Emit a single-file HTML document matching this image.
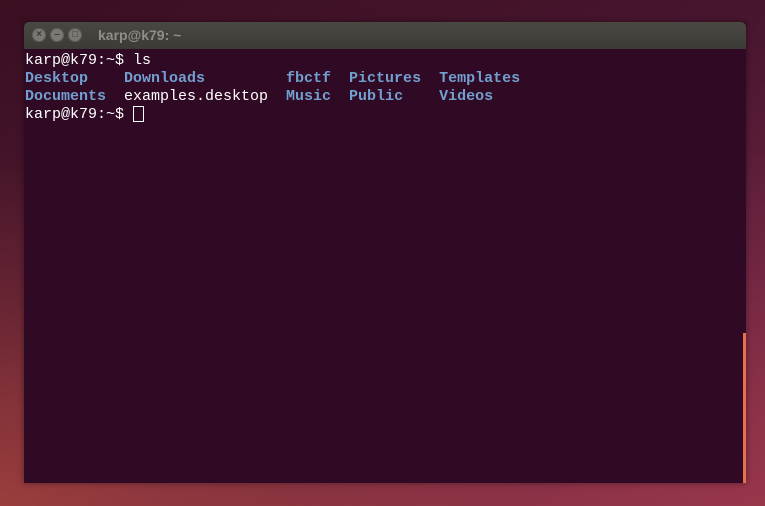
<!DOCTYPE html>
<html><head><style>
body{margin:0;width:765px;height:506px;overflow:hidden;background:linear-gradient(160deg,#3a0f22 0%,#4a1630 40%,#6a2440 70%,#9a3a45 100%);position:relative;font-family:"Liberation Mono",monospace}
.bg2{position:absolute;inset:0;background:radial-gradient(ellipse at 0% 100%,rgba(190,80,60,.6),transparent 50%),radial-gradient(ellipse at 100% 100%,rgba(150,50,80,.5),transparent 50%)}
.win{position:absolute;left:24px;top:22px;width:722px;height:461px;background:#300a24;box-shadow:0 0 6px rgba(0,0,0,.4)}
.tb{height:27px;background:linear-gradient(#494843,#3c3b37);border-radius:5px 5px 0 0;position:relative}
.btn{position:absolute;top:6px;width:14px;height:14px;border-radius:50%;background:#7a7975;box-shadow:inset 0 0 0 1px #5a5955;color:#3c3b37;font:bold 10px/14px "Liberation Sans",sans-serif;text-align:center}
.title{position:absolute;left:74px;top:5px;color:#8f8d87;font:bold 14px/17px "Liberation Sans",sans-serif}
pre{margin:0;position:absolute;left:1px;top:30px;color:#fff;font:15px/18px "Liberation Mono",monospace}
b{color:#729fcf}
.cur{display:inline-block;height:16px;border:1px solid #fff;vertical-align:-4px;box-sizing:border-box;width:11px}
.sb{position:absolute;right:0;top:311px;width:3px;height:150px;background:#e8704a}
</style></head><body><div class="bg2"></div>
<div class="win"><div class="tb">
<div class="btn" style="left:8px">×</div><div class="btn" style="left:26px">–</div><div class="btn" style="left:44px">□</div>
<div class="title">karp@k79: ~</div></div>
<pre>karp@k79:~$ ls
<b>Desktop    Downloads         fbctf  Pictures  Templates</b>
<b>Documents</b>  examples.desktop  <b>Music  Public    Videos</b>
karp@k79:~$ <span class="cur"></span></pre>
<div class="sb"></div></div>
</body></html>
